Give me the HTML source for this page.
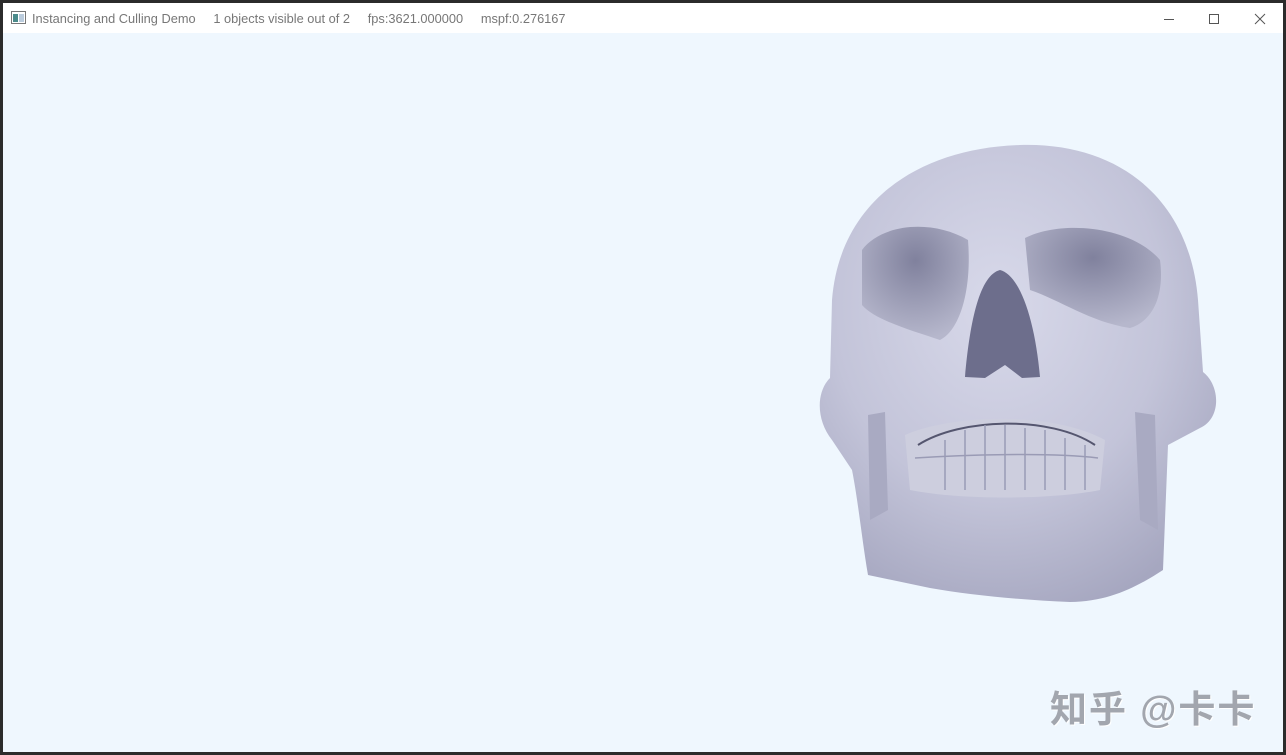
<!DOCTYPE html>
<html><head><meta charset="utf-8"><style>
html,body{margin:0;padding:0;width:1286px;height:755px;overflow:hidden;background:#2b2b2b;}
.win{position:absolute;left:3px;top:3px;width:1280px;height:749px;background:#eff7fe;}
.title{position:absolute;left:0;top:0;width:1280px;height:30px;background:#fff;font-family:"Liberation Sans",sans-serif;font-size:12.8px;color:#777;}
.title span{position:absolute;top:8px;white-space:nowrap;}
.wm{position:absolute;left:1050px;top:679px;font-family:"Liberation Sans","Noto Sans CJK SC",sans-serif;font-size:37px;font-weight:bold;color:#a2a6ae;text-shadow:1px 1px 0 #fff;letter-spacing:2px;}
</style></head><body>
<div class="win">
<div class="title">
<svg style="position:absolute;left:8px;top:8px" width="15" height="13"><rect x="0.5" y="0.5" width="14" height="12" fill="#fff" stroke="#777"/><rect x="2" y="3" width="5" height="8" fill="#4a8a8a"/><rect x="8" y="3" width="5" height="8" fill="#bcd"/></svg>
<span style="left:29px">Instancing and Culling Demo &nbsp;&nbsp;&nbsp; 1 objects visible out of 2 &nbsp;&nbsp;&nbsp; fps:3621.000000 &nbsp;&nbsp;&nbsp; mspf:0.276167</span>
<svg style="position:absolute;left:1155px;top:8px" width="120" height="16" stroke="#555" fill="none" stroke-width="1"><line x1="6" y1="8.5" x2="16" y2="8.5"/><rect x="51.5" y="3.5" width="9" height="9"/><path d="M97 3 L107 13 M107 3 L97 13"/></svg>
</div>
</div>
<svg style="position:absolute;left:0;top:0" width="1286" height="755">
<defs>
<radialGradient id="g" cx="0.45" cy="0.35" r="0.7"><stop offset="0" stop-color="#d8d9ea"/><stop offset="0.6" stop-color="#c3c4d9"/><stop offset="1" stop-color="#a6a7c0"/></radialGradient>
<radialGradient id="e" cx="0.5" cy="0.3" r="0.7"><stop offset="0" stop-color="#80819d"/><stop offset="1" stop-color="#b6b7cc"/></radialGradient>
</defs>
<path d="M1020,145 C1120,142 1190,200 1198,300 L1203,372 C1220,385 1222,418 1200,428 L1168,445 L1163,570 C1140,585 1110,602 1070,602 C1020,600 970,595 930,588 L868,575 C862,540 858,500 852,470 L832,440 C816,420 816,392 830,378 L832,300 C840,200 920,148 1020,145 Z" fill="url(#g)"/>
<path d="M862,250 C880,225 930,218 968,240 C972,290 960,330 940,340 C910,330 875,320 862,305 Z" fill="url(#e)"/>
<path d="M1025,238 C1060,220 1130,225 1160,260 C1165,300 1150,322 1130,328 C1090,322 1060,300 1030,290 Z" fill="url(#e)"/>
<path d="M1000,270 C1020,275 1035,320 1040,377 L1022,378 L1005,365 L985,378 L965,377 C970,320 980,275 1000,270 Z" fill="#6d6e8c"/>
<path d="M905,435 C950,415 1050,410 1105,440 L1100,490 C1050,500 960,500 910,490 Z" fill="#cdcede"/>
<path d="M918,445 C960,418 1050,415 1095,445" fill="none" stroke="#55566f" stroke-width="2"/>
<g stroke="#9a9bb5" stroke-width="1.5" fill="none">
<path d="M945,440 V490 M965,430 V490 M985,425 V490 M1005,425 V490 M1025,428 V490 M1045,430 V490 M1065,438 V490 M1085,445 V490"/>
<path d="M915,458 C960,455 1050,452 1098,458"/>
</g>
<path d="M868,415 L885,412 L888,510 L870,520 Z M1135,412 L1155,415 L1158,530 L1140,520 Z" fill="#a9aac2"/>
</svg>
<div class="wm">知乎 @卡卡</div>
</body></html>
